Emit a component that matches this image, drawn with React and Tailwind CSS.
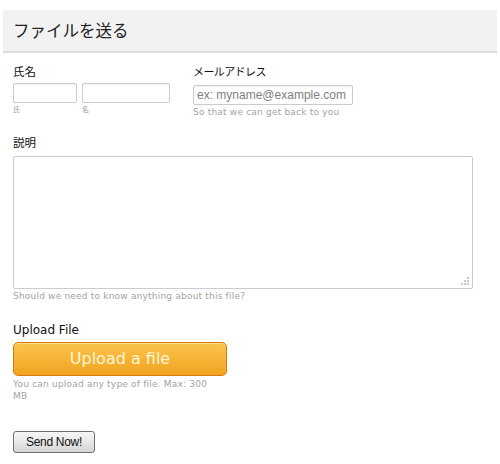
export default function App() {
  const jp = "font-['Noto_Sans_CJK_JP',sans-serif]";
  const hint = "font-['DejaVu_Sans',sans-serif] text-[9px] tracking-[0.2px] text-[#a3a3a3]";
  const input =
    "h-[20px] border border-[#c9ccd4] rounded-[2px] bg-white outline-none shadow-[inset_0_1px_1px_rgba(0,0,0,0.06)]";

  return (
    <div className="w-[500px] h-[464px] bg-white pt-[10px] px-[3px] text-[#111]">
      <div className="h-[43px] bg-[#f2f2f2] border-b-2 border-[#dcdcdc] flex items-center px-[10px]">
        <h1 className={`${jp} text-[16.5px] leading-none text-[#222]`}>ファイルを送る</h1>
      </div>

      <div className="px-[10px]">
        <div className="flex mt-[8px]">
          <div className="w-[180px]">
            <p className={`${jp} text-[11.5px] leading-[20px] h-[20px]`}>氏名</p>
            <div className="flex gap-[5px] mt-[2px]">
              <div className="flex flex-col">
                <input className={`${input} w-[64px]`} />
                <span className={`${jp} text-[7px] leading-[12px] text-[#999]`}>氏</span>
              </div>
              <div className="flex flex-col">
                <input className={`${input} w-[88px]`} />
                <span className={`${jp} text-[7px] leading-[12px] text-[#999]`}>名</span>
              </div>
            </div>
          </div>
          <div>
            <p className={`${jp} text-[11px] tracking-[-0.6px] leading-[20px] h-[20px]`}>メールアドレス</p>
            <input
              className={`${input} w-[160px] mt-[2px] px-[3px] font-['Liberation_Sans',sans-serif] text-[12px] placeholder:text-[#808080]`}
              placeholder="ex: myname@example.com"
            />
            <p className={`${hint} leading-[12px] mt-[1px]`}>So that we can get back to you</p>
          </div>
        </div>

        <p className={`${jp} text-[11.5px] leading-[20px] mt-[14px]`}>説明</p>
        <div className="relative w-[460px] mt-[4px]">
          <textarea className="block w-[460px] h-[133px] resize-none border border-[#c9ccd4] rounded-[2px] outline-none" />
          <svg className="absolute right-[4px] bottom-[4px]" width="8" height="8" viewBox="0 0 8 8">
            <rect x="6" y="0" width="2" height="2" fill="#c8c8c8" />
            <rect x="3" y="3" width="2" height="2" fill="#c8c8c8" />
            <rect x="6" y="3" width="2" height="2" fill="#c8c8c8" />
            <rect x="0" y="6" width="2" height="2" fill="#c8c8c8" />
            <rect x="3" y="6" width="2" height="2" fill="#c8c8c8" />
            <rect x="6" y="6" width="2" height="2" fill="#c8c8c8" />
          </svg>
        </div>
        <p className={`${hint} leading-[12px] mt-[1px]`}>Should we need to know anything about this file?</p>

        <p className="font-['DejaVu_Sans',sans-serif] text-[12px] leading-[16px] mt-[20px]">Upload File</p>
        <button className="mt-[4px] w-[214px] h-[34px] rounded-[5px] border border-[#d9780c] bg-gradient-to-b from-[#fac54a] to-[#f1a31c] font-['DejaVu_Sans',sans-serif] text-[16px] text-[#fff4d8] shadow-[inset_0_1px_0_rgba(255,255,255,0.4)]">
          Upload a file
        </button>
        <p className={`${hint} leading-[12px] mt-[2px] w-[205px]`}>
          You can upload any type of file. Max: 300 MB
        </p>

        <button className="mt-[29px] w-[82px] h-[22px] rounded-[3px] border border-[#707070] bg-gradient-to-b from-[#f6f6f6] via-[#e8e8e8] to-[#d4d4d4] font-['Liberation_Sans',sans-serif] text-[12px] tracking-[-0.3px] text-[#111]">
          Send Now!
        </button>
      </div>
    </div>
  );
}
